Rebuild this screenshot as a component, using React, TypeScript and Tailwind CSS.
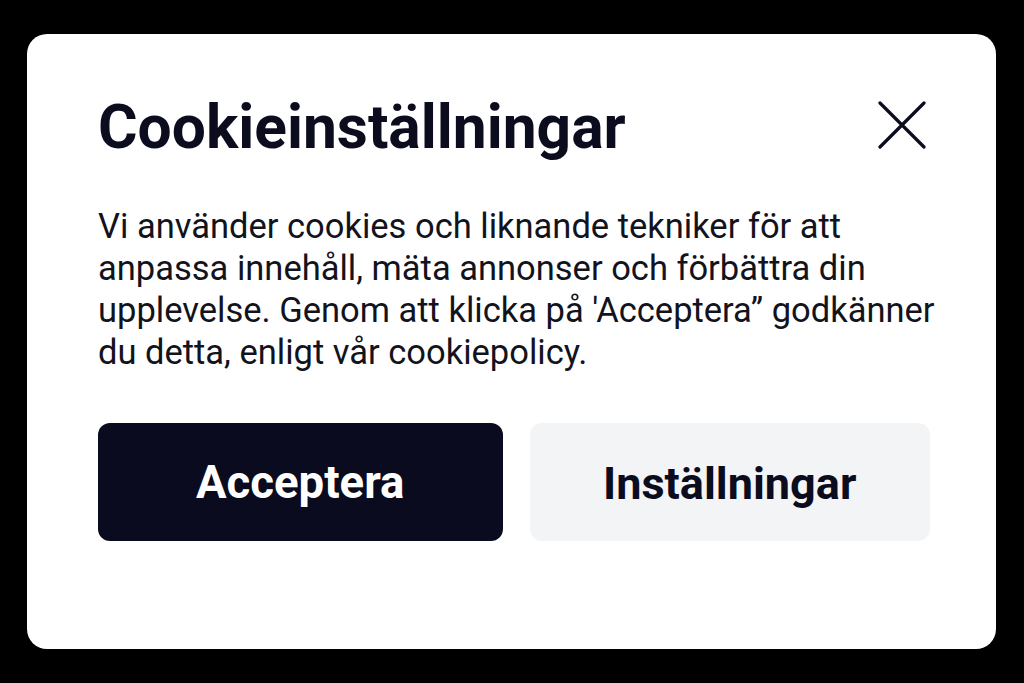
import React from "react";

export default function App() {
  return (
    <div className="w-[1024px] h-[683px] bg-black pl-[27px] pt-[34px]" style={{ fontFamily: "Roboto, 'Noto Sans', sans-serif" }}>
      <div className="w-[969px] h-[615px] bg-white rounded-[20px] pl-[71px] pr-[66px] pt-[64px]">
        <div className="flex items-center justify-between">
          <h1 className="text-[60.5px] leading-[60.5px] font-bold text-[#0b0d1e]">Cookieinställningar</h1>
          <svg width="48" height="48" viewBox="0 0 48 48" className="mr-[4px] mt-[-6px]" fill="none" stroke="#0b0d1e" strokeWidth="3.2" strokeLinecap="round">
            <path d="M2 2 L46 46 M46 2 L2 46" />
          </svg>
        </div>
        <p className="mt-[46px] text-[34.5px] leading-[42px] text-[#12131c] whitespace-nowrap">
          <span className="block">Vi använder cookies och liknande tekniker för att</span>
          <span className="block">anpassa innehåll, mäta annonser och förbättra din</span>
          <span className="block">upplevelse. Genom att klicka på 'Acceptera” godkänner</span>
          <span className="block">du detta, enligt vår cookiepolicy.</span>
        </p>
        <div className="mt-[50px] flex gap-[27px]">
          <button className="w-[405px] h-[118px] pt-[4px] rounded-[12px] bg-[#0a0b1e] text-white text-[45.5px] font-bold">Acceptera</button>
          <button className="w-[401px] h-[118px] pt-[4px] rounded-[12px] bg-[#f3f4f6] text-[#0b0d1e] text-[45px] font-bold">Inställningar</button>
        </div>
      </div>
    </div>
  );
}
